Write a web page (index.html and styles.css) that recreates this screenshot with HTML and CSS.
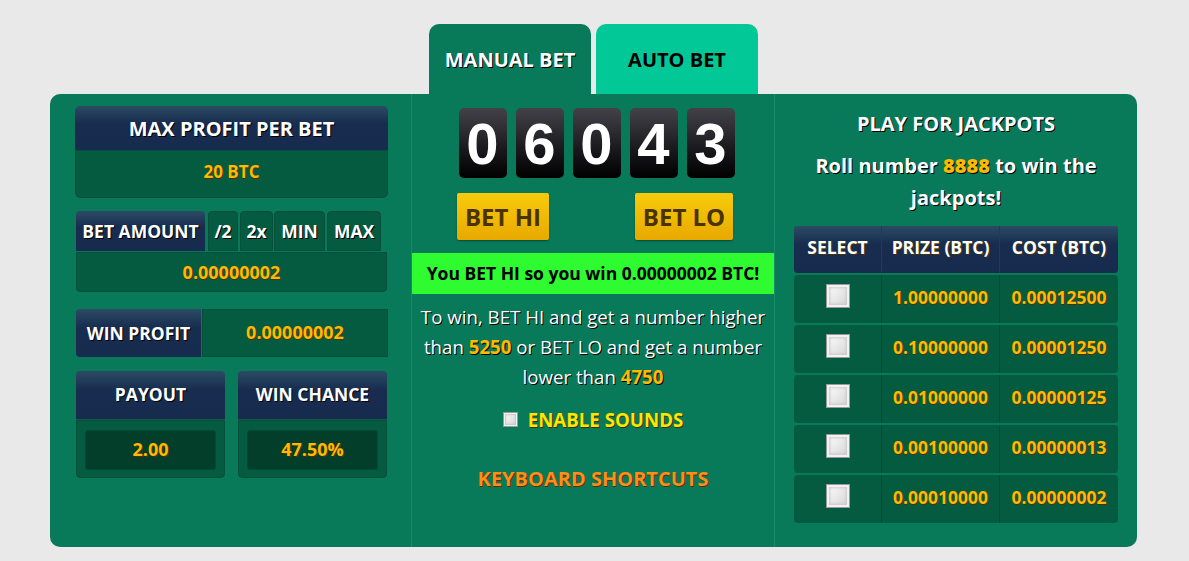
FILE: index.html
```html
<!DOCTYPE html>
<html lang="en">

<head>
    <meta charset="UTF-8">
    <title>Dice - Manual Bet</title>
    <link rel="stylesheet" href="styles.css">
</head>

<body>

    <div class="game">
        <div class="tabs">
            <div class="tab tab-active">MANUAL BET</div>
            <div class="tab tab-auto">AUTO BET</div>
        </div>

        <div class="panel">
            <!-- left column: bet settings -->
            <section class="col col-left">
                <div class="box">
                    <div class="box-head">MAX PROFIT PER BET</div>
                    <div class="box-value">20 BTC</div>
                </div>

                <div class="bet-amount">
                    <div class="bet-row">
                        <div class="cell-head bet-label">BET AMOUNT</div>
                        <div class="cell-btn btn-half">/2</div>
                        <div class="cell-btn btn-double">2x</div>
                        <div class="cell-btn btn-min">MIN</div>
                        <div class="cell-btn btn-max">MAX</div>
                    </div>
                    <div class="bet-value">0.00000002</div>
                </div>

                <div class="win-profit">
                    <div class="cell-head win-label">WIN PROFIT</div>
                    <div class="win-value">0.00000002</div>
                </div>

                <div class="stats">
                    <div class="stat">
                        <div class="stat-head">PAYOUT</div>
                        <div class="stat-body"><div class="stat-value">2.00</div></div>
                    </div>
                    <div class="stat">
                        <div class="stat-head">WIN CHANCE</div>
                        <div class="stat-body"><div class="stat-value">47.50%</div></div>
                    </div>
                </div>
            </section>

            <!-- middle column: roll -->
            <section class="col col-mid">
                <div class="digits">
                    <span class="digit">0</span>
                    <span class="digit">6</span>
                    <span class="digit">0</span>
                    <span class="digit">4</span>
                    <span class="digit">3</span>
                </div>
                <div class="bet-buttons">
                    <button class="bet-btn btn-hi">BET HI</button>
                    <button class="bet-btn btn-lo">BET LO</button>
                </div>
                <div class="result">You BET HI so you win 0.00000002 BTC!</div>
                <p class="rules">To win, BET HI and get a number higher than <b>5250</b> or BET LO and get a number lower than <b>4750</b></p>
                <label class="sounds"><span class="check small"></span>ENABLE SOUNDS</label>
                <div class="shortcuts">KEYBOARD SHORTCUTS</div>
            </section>

            <!-- right column: jackpots -->
            <section class="col col-right">
                <h3>PLAY FOR JACKPOTS</h3>
                <p class="jackpot-info">Roll number <b>8888</b> to win the jackpots!</p>
                <div class="jackpots">
                    <div class="jp-row jp-head">
                        <div>SELECT</div>
                        <div>PRIZE (BTC)</div>
                        <div>COST (BTC)</div>
                    </div>
                    <div class="jp-row">
                        <div><span class="check"></span></div>
                        <div>1.00000000</div>
                        <div>0.00012500</div>
                    </div>
                    <div class="jp-row">
                        <div><span class="check"></span></div>
                        <div>0.10000000</div>
                        <div>0.00001250</div>
                    </div>
                    <div class="jp-row">
                        <div><span class="check"></span></div>
                        <div>0.01000000</div>
                        <div>0.00000125</div>
                    </div>
                    <div class="jp-row">
                        <div><span class="check"></span></div>
                        <div>0.00100000</div>
                        <div>0.00000013</div>
                    </div>
                    <div class="jp-row">
                        <div><span class="check"></span></div>
                        <div>0.00010000</div>
                        <div>0.00000002</div>
                    </div>
                </div>
            </section>
        </div>
    </div>

</body>

</html>
```

FILE: styles.css
```css
body {
    font-family: 'Open Sans', 'Liberation Sans', sans-serif;
    margin: 0;
    padding: 0;
    background-color: #e9e9e9;
    color: #fff;
}

.game {
    width: 1087px;
    margin: 24px 0 0 50px;
}

/* tabs */
.tabs {
    display: flex;
    gap: 5px;
    padding-left: 379px;
}

.tab {
    width: 162px;
    height: 70px;
    border-radius: 10px 10px 0 0;
    font-weight: 700;
    font-size: 20px;
    text-align: center;
    line-height: 72px;
}

.tab-active {
    background-color: #087a5a;
    color: #fff;
    text-shadow: 1px 1px 0 #000;
}

.tab-auto {
    background-color: #02c897;
    color: #000;
}

/* main panel */
.panel {
    display: grid;
    grid-template-columns: 361px 364px 362px;
    height: 453px;
    background-color: #087a5a;
    border-radius: 10px;
}

.col {
    box-sizing: border-box;
}

.col-left {
    padding: 12px 23px 0 25px;
}

.col-mid {
    border-left: 1px solid #1a8a6a;
    border-right: 1px solid #1a8a6a;
    padding-top: 14px;
    text-align: center;
}

.col-right {
    padding: 0 19px;
    text-align: center;
}

/* shared cells */
.box-head,
.cell-head,
.stat-head,
.jp-head div {
    background: linear-gradient(#2c4b64, #172c4e 40%, #162b4d);
    color: #fff;
    font-weight: 700;
    text-shadow: 1px 1px 0 #000;
}

.box-value,
.bet-value,
.win-value,
.cell-btn,
.stat-body,
.jp-row div {
    background-color: #055b40;
    border: 1px solid #04503a;
    box-sizing: border-box;
}

.box-value,
.bet-value,
.win-value,
.stat-value,
.jp-row div {
    color: #ffb900;
    font-weight: 700;
    text-shadow: 1px 1px 0 #4a3300;
}

/* max profit */
.box {
    width: 313px;
    border-radius: 5px;
    overflow: hidden;
}

.box-head {
    height: 44px;
    line-height: 46px;
    text-align: center;
    font-size: 20px;
}

.box-value {
    height: 48px;
    line-height: 42px;
    text-align: center;
    font-size: 17px;
    border-radius: 0 0 5px 5px;
}

/* bet amount */
.bet-amount {
    margin-top: 13px;
    width: 311px;
    margin-left: 1px;
}

.bet-row {
    display: flex;
    gap: 3px;
    height: 40px;
}

.cell-head {
    border-radius: 4px 4px 0 0;
    font-size: 17.5px;
}

.bet-label {
    width: 129px;
    text-align: center;
    line-height: 40px;
}

.cell-btn {
    border-radius: 4px 4px 0 0;
    font-weight: 700;
    font-size: 17.5px;
    line-height: 38px;
    text-align: center;
    text-shadow: 1px 1px 0 #000;
}

.btn-half { width: 30px; }
.btn-double { width: 33px; margin-left: -1px; }
.btn-min { width: 51px; margin-left: -2px; }
.btn-max { width: 54px; margin-left: -1px; }

.bet-value {
    height: 40px;
    line-height: 38px;
    text-align: center;
    font-size: 18px;
    border-radius: 0 0 4px 4px;
    margin-top: 1px;
}

/* win profit */
.win-profit {
    display: flex;
    margin-top: 17px;
    margin-left: 1px;
    width: 312px;
    height: 48px;
}

.win-label {
    width: 125px;
    line-height: 48px;
    text-align: center;
    border-radius: 4px 0 0 4px;
}

.win-value {
    flex: 1;
    margin-left: 1px;
    text-align: center;
    line-height: 44px;
    font-size: 18px;
}

/* payout / win chance */
.stats {
    display: flex;
    gap: 13px;
    margin-top: 14px;
    margin-left: 1px;
}

.stat {
    width: 149px;
    border-radius: 4px;
    overflow: hidden;
}

.stat-head {
    height: 48px;
    line-height: 46px;
    text-align: center;
    font-size: 17.5px;
    border-bottom: 1px solid #0f5a48;
}

.stat-body {
    height: 58px;
    padding: 9px 8px;
    border-radius: 0 0 4px 4px;
}

.stat-value {
    background-color: #033e2b;
    border: 1px solid #024a33;
    border-radius: 3px;
    height: 40px;
    line-height: 37px;
    text-align: center;
    font-size: 18px;
    box-sizing: border-box;
}

/* digits */
.digits {
    display: flex;
    justify-content: center;
    gap: 9px;
    margin-left: 7px;
}

.digit {
    width: 48px;
    height: 70px;
    border-radius: 5px;
    background: linear-gradient(#424249, #1c1c20 55%, #000);
    font-family: 'Liberation Sans', Arial, sans-serif;
    font-weight: 700;
    font-size: 58px;
    line-height: 72px;
    color: #fff;
}

.bet-buttons {
    display: flex;
    justify-content: space-between;
    padding: 0 41px 0 45px;
    margin-top: 15px;
}

.bet-btn {
    height: 47px;
    border: none;
    border-radius: 2px;
    background: linear-gradient(#f7cb0c, #e8a900);
    box-shadow: 0 1px 2px rgba(0, 0, 0, 0.4);
    color: #4a3300;
    font-family: 'Open Sans', sans-serif;
    font-weight: 700;
    font-size: 24px;
    padding: 0;
    cursor: pointer;
}

.btn-hi { width: 92px; }
.btn-lo { width: 98px; }

.result {
    background-color: #2efc31;
    color: #000;
    font-weight: 700;
    font-size: 17.5px;
    height: 41px;
    line-height: 41px;
    margin-top: 13px;
}

.rules {
    margin: 8px 2px 0;
    font-size: 18.7px;
    line-height: 30px;
    text-shadow: 1px 1px 0 #000;
}

.rules b {
    color: #ffb900;
}

.sounds {
    display: flex;
    justify-content: center;
    align-items: center;
    gap: 10px;
    margin-top: 15px;
    color: #ffe600;
    font-weight: 700;
    font-size: 18.7px;
    text-shadow: 1px 1px 0 #3b3000;
}

.shortcuts {
    margin-top: 33px;
    color: #ff8d18;
    font-weight: 700;
    font-size: 20px;
    text-shadow: 1px 1px 0 #5a2c00;
}

/* checkbox */
.check {
    display: inline-block;
    width: 22px;
    height: 22px;
    border: 1px solid #9a9a9a;
    background: linear-gradient(135deg, #ffffff, #d2d2d2);
    box-shadow: inset 0 0 0 2px #f2f2f2, inset 0 0 3px 3px #c8c8c8;
    vertical-align: middle;
}

.check.small {
    width: 13px;
    height: 13px;
    box-shadow: inset 0 0 0 1px #f2f2f2, inset 0 0 2px 2px #c8c8c8;
}

/* jackpots */
.col-right h3 {
    margin: 16px 0 0;
    font-size: 20px;
    font-weight: 700;
    text-shadow: 1px 1px 0 #000;
}

.jackpot-info {
    margin: 13px 0 0;
    font-size: 20px;
    font-weight: 700;
    line-height: 32px;
    padding: 0 20px;
    text-shadow: 1px 1px 0 #000;
}

.jackpot-info b {
    color: #ffb900;
}

.jackpots {
    margin-top: 12px;
    display: flex;
    flex-direction: column;
    gap: 2px;
}

.jp-row {
    display: grid;
    grid-template-columns: 88px 118px 118px;
    height: 48px;
    border-radius: 4px;
    overflow: hidden;
}

.jp-row div {
    border: none;
    border-right: 1px solid #044a34;
    font-size: 17.5px;
    line-height: 45px;
}

.jp-row div:last-child {
    border-right: none;
}

.jp-head {
    height: 47px;
}

.jp-head div {
    line-height: 42px;
    border-right: 1px solid #0c4a3a;
    color: #fff;
}

.jp-row .check {
    margin-top: -6px;
}
```
